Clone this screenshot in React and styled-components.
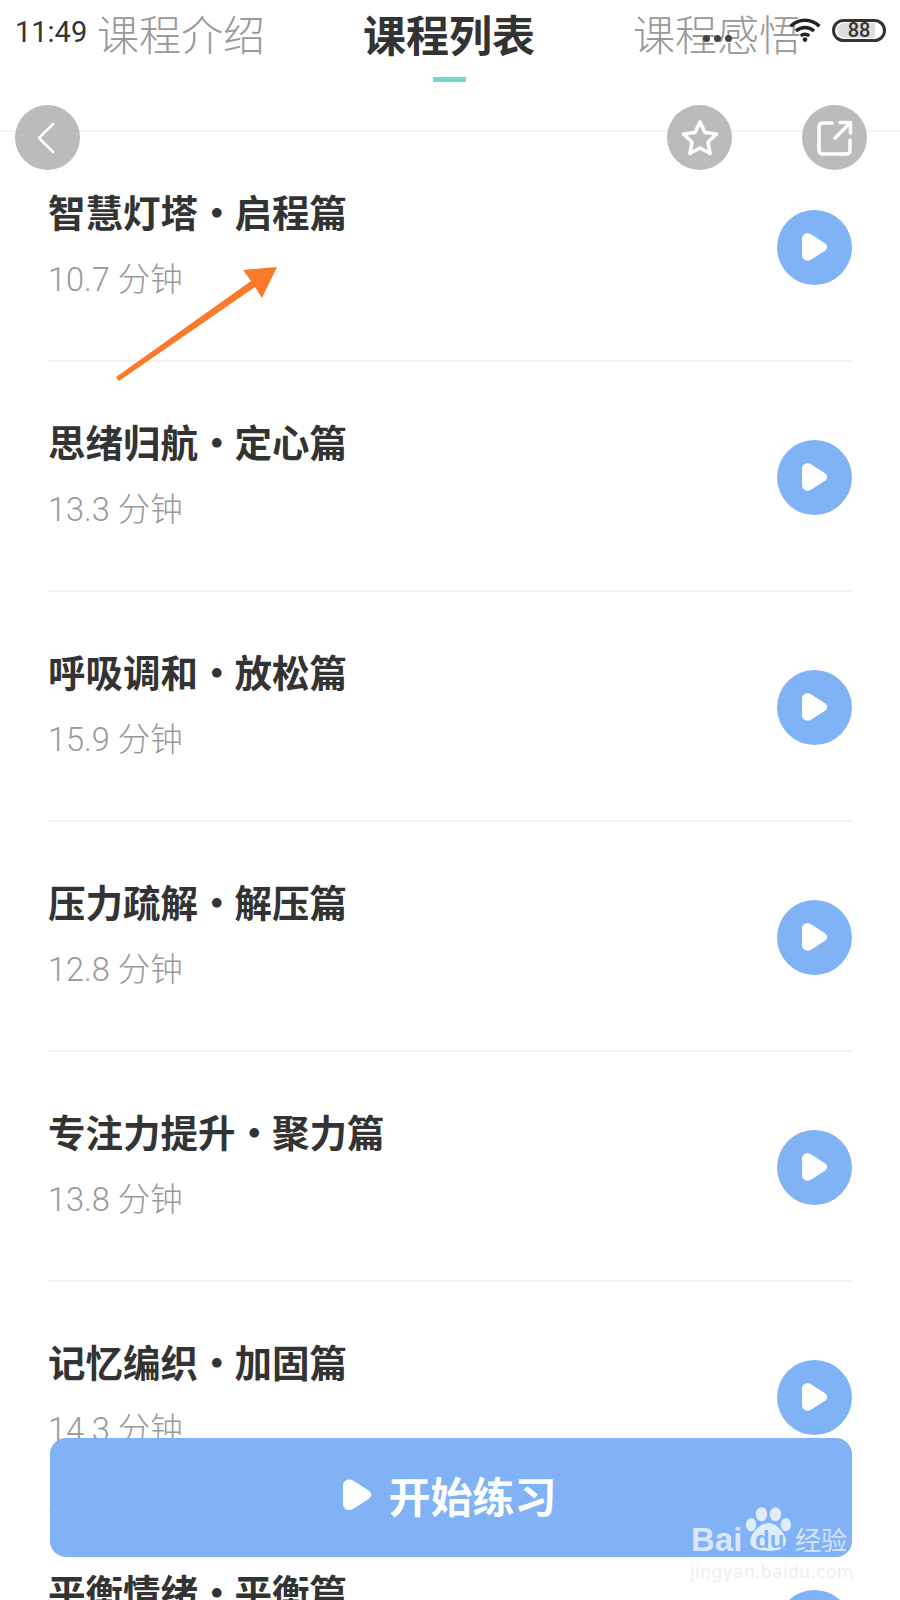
import React from "react";
import styled, { createGlobalStyle } from "styled-components";

const CJK = `"Noto Sans CJK SC", "Noto Sans", sans-serif`;
const LIGHT = `Roboto, "Noto Sans CJK SC", sans-serif`;

const courses = [
  { name: "智慧灯塔", part: "启程篇", mins: "10.7 分钟" },
  { name: "思绪归航", part: "定心篇", mins: "13.3 分钟" },
  { name: "呼吸调和", part: "放松篇", mins: "15.9 分钟" },
  { name: "压力疏解", part: "解压篇", mins: "12.8 分钟" },
  { name: "专注力提升", part: "聚力篇", mins: "13.8 分钟" },
  { name: "记忆编织", part: "加固篇", mins: "14.3 分钟" },
  { name: "平衡情绪", part: "平衡篇", mins: "" },
];

const GlobalStyle = createGlobalStyle`
  html, body {
    margin: 0;
    background: #fff;
  }
`;

const Page = styled.div`
  position: relative;
  width: 900px;
  height: 1600px;
  overflow: hidden;
  background: #fff;
  font-family: ${CJK};
`;

const Tabs = styled.div`
  display: flex;
  gap: 100px;
  height: 132px;
  padding: 8px 0 0 97px;
  box-sizing: border-box;
  border-bottom: 2px solid #f4f4f4;
`;

const Tab = styled.div`
  width: 168px;
  display: flex;
  flex-direction: column;
  align-items: center;
  white-space: nowrap;
  font-size: ${(p) => (p.$active ? 43 : 42)}px;
  line-height: 50px;
  font-weight: ${(p) => (p.$active ? 700 : 300)};
  color: ${(p) => (p.$active ? "#333" : "#999")};
`;

const Underline = styled.div`
  width: 33px;
  height: 5px;
  margin-top: 19px;
  background: #6edccd;
`;

const List = styled.div`
  padding: 0 48px;
`;

const Row = styled.div`
  height: 230px;
  box-sizing: border-box;
  display: flex;
  align-items: center;
  justify-content: space-between;
  border-bottom: 2px solid #f4f4f4;
`;

const RowText = styled.div`
  display: flex;
  flex-direction: column;
  gap: 25px;
  margin-bottom: 1px;
`;

const Title = styled.div`
  display: flex;
  font-size: 37.5px;
  line-height: 44px;
  font-weight: 700;
  color: #333;
`;

const Sep = styled.span`
  width: 36.5px;
  text-align: center;
`;

const Mins = styled.div`
  min-height: 44px;
  font-family: ${LIGHT};
  font-size: 32.5px;
  line-height: 44px;
  font-weight: 300;
  color: #999;
`;

const PlayButton = styled.div`
  width: 75px;
  height: 75px;
  margin-top: 2px;
  border-radius: 50%;
  background: #80b3f6;
  display: flex;
  align-items: center;
  justify-content: center;
  flex-shrink: 0;
`;

const StatusBar = styled.div`
  position: absolute;
  top: 0;
  left: 0;
  right: 0;
  height: 60px;
  display: flex;
  align-items: center;
  padding: 0 14px 0 15px;
  box-sizing: border-box;
`;

const Clock = styled.div`
  font-family: Roboto, sans-serif;
  font-size: 29px;
  color: #333;
  line-height: 60px;
  margin-top: 4px;
`;

const StatusIcons = styled.div`
  margin-left: auto;
  display: flex;
  align-items: center;
  gap: 11px;
  margin-top: 0;
`;

const Dots = styled.div`
  display: flex;
  gap: 4px;
  margin-right: 46px;
  margin-top: 16px;
`;

const Dot = styled.span`
  width: 7px;
  height: 7px;
  border-radius: 50%;
  background: #444;
`;

const Battery = styled.div`
  width: 54px;
  height: 23px;
  box-sizing: border-box;
  border: 3px solid #333;
  border-radius: 12px;
  display: flex;
  align-items: center;
  justify-content: center;
  padding: 1px 2px;
`;

const BatteryFill = styled.div`
  width: 100%;
  height: 100%;
  border-radius: 8px;
  background: linear-gradient(90deg, #ddd 86%, transparent 86%);
  font-family: Roboto, sans-serif;
  font-size: 20px;
  font-weight: 500;
  line-height: 15px;
  text-align: center;
  color: #333;
`;

const FloatBar = styled.div`
  position: absolute;
  top: 105px;
  left: 15px;
  right: 33px;
  display: flex;
  gap: 70px;
`;

const RoundButton = styled.div`
  width: 65px;
  height: 65px;
  border-radius: 50%;
  background: rgba(170, 170, 170, 0.8);
  display: flex;
  align-items: center;
  justify-content: center;
  &:first-child {
    margin-right: auto;
  }
`;

const Arrow = styled.svg`
  position: absolute;
  top: 0;
  left: 0;
`;

const StartButton = styled.div`
  position: absolute;
  left: 50px;
  top: 1438px;
  width: 802px;
  height: 119px;
  border-radius: 16px;
  background: #80b2f5;
  display: flex;
  align-items: center;
  justify-content: center;
  gap: 17px;
  color: #fff;
  font-size: 42px;
  line-height: 50px;
  font-weight: 700;
  padding: 0 2px 6px 0;
  box-sizing: border-box;
`;

const Watermark = styled.div`
  position: absolute;
  left: 690px;
  top: 1502px;
  width: 165px;
  height: 82px;
`;

const BaiText = styled.span`
  position: absolute;
  left: 1px;
  top: 19px;
  font-family: "Liberation Sans", sans-serif;
  font-size: 33px;
  line-height: 38px;
  font-weight: 700;
  color: rgba(224, 235, 252, 0.95);
`;

const Paw = styled.svg`
  position: absolute;
  left: 55px;
  top: 3px;
`;

const DuText = styled.span`
  position: absolute;
  left: 65px;
  top: 26px;
  font-family: "Liberation Sans", sans-serif;
  font-size: 24px;
  line-height: 24px;
  font-weight: 700;
  color: #80b2f5;
`;

const JingText = styled.span`
  position: absolute;
  left: 105px;
  top: 21px;
  font-size: 26px;
  line-height: 32px;
  color: rgba(224, 235, 252, 0.9);
`;

const Domain = styled.span`
  position: absolute;
  left: 0;
  top: 58px;
  font-family: "DejaVu Sans", sans-serif;
  font-size: 17px;
  line-height: 24px;
  letter-spacing: 0.4px;
  color: #eceff3;
  white-space: nowrap;
`;

const PlayGlyph = ({ width }) => (
  <svg width={width} height={(width * 28) / 25} viewBox="0 0 25 28">
    <path
      d="M0 6C0 1 5 -1 9 1.300L22.500 10C26 12 26 16 22.500 18L9 26.700C5 29 0 27 0 22Z"
      fill="#fff"
    />
  </svg>
);

const App = () => (
  <Page>
    <GlobalStyle />
    <Tabs>
      <Tab>课程介绍</Tab>
      <Tab $active>
        课程列表
        <Underline />
      </Tab>
      <Tab>课程感悟</Tab>
    </Tabs>
    <List>
      {courses.map((c) => (
        <Row key={c.name}>
          <RowText>
            <Title>
              {c.name}
              <Sep>·</Sep>
              {c.part}
            </Title>
            <Mins>{c.mins}</Mins>
          </RowText>
          <PlayButton>
            <PlayGlyph width={25} />
          </PlayButton>
        </Row>
      ))}
    </List>

    <StatusBar>
      <Clock>11:49</Clock>
      <StatusIcons>
        <Dots>
          <Dot />
          <Dot />
          <Dot />
        </Dots>
        <svg width="32" height="26" viewBox="0 0 30 24" fill="none" stroke="#222" strokeWidth="3.200">
          <path d="M1.500 8.500C9 1 21 1 28.500 8.500" />
          <path d="M6.500 13C11.500 8.500 18.500 8.500 23.500 13" />
          <path d="M11 17.500C13.500 15.500 16.500 15.500 19 17.500" />
          <circle cx="15" cy="21" r="2.200" fill="#222" stroke="none" />
        </svg>
        <Battery>
          <BatteryFill>88</BatteryFill>
        </Battery>
      </StatusIcons>
    </StatusBar>

    <FloatBar>
      <RoundButton>
        <svg width="32" height="36" viewBox="0 0 32 36" fill="none" stroke="#fff" strokeWidth="2.500" strokeLinecap="round" strokeLinejoin="round">
          <path d="M21 4L7 18L21 32" />
        </svg>
      </RoundButton>
      <RoundButton>
        <svg width="40" height="38" viewBox="0 0 40 38" fill="none" stroke="#fff" strokeWidth="3.500" strokeLinejoin="round">
          <path d="M20 3L25 13.500L36.500 15L28 23L30.200 34.500L20 29L9.800 34.500L12 23L3.500 15L15 13.500Z" />
        </svg>
      </RoundButton>
      <RoundButton>
        <svg width="38" height="38" viewBox="0 0 38 38" fill="none" stroke="#fff" strokeWidth="3.500" strokeLinecap="round" strokeLinejoin="round">
          <path d="M16 4H7C4.500 4 3 5.500 3 8V31C3 33.500 4.500 35 7 35H30C32.500 35 34 33.500 34 31V21" />
          <path d="M19 19L34 4M24 3.500H34.500V14" />
        </svg>
      </RoundButton>
    </FloatBar>

    <Arrow width="900" height="500" viewBox="0 0 900 500">
      <polygon points="119,381 255,287 262,298 277,267 243,270 251,281 116,377" fill="#fa7a2a" />
    </Arrow>

    <StartButton>
      <PlayGlyph width={28} />
      开始练习
    </StartButton>

    <Watermark>
      <BaiText>Bai</BaiText>
      <Paw width="47" height="48" viewBox="9 4 54 52">
        <g fill="#e0ebfc">
          <ellipse cx="28" cy="13" rx="6.500" ry="8" />
          <ellipse cx="44" cy="13" rx="6.500" ry="8" />
          <ellipse cx="16" cy="25" rx="6" ry="7.500" />
          <ellipse cx="56" cy="25" rx="6" ry="7.500" />
          <path d="M36 23C46 23 56 36 56 44C56 52 48 55 36 55C24 55 15 52 15 44C15 36 26 23 36 23Z" />
        </g>
      </Paw>
      <DuText>du</DuText>
      <JingText>经验</JingText>
      <Domain>jingyan.baidu.com</Domain>
    </Watermark>
  </Page>
);

export default App;
